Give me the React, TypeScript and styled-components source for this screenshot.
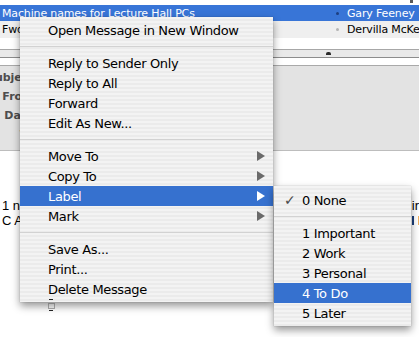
import React from 'react'
import styled, { createGlobalStyle } from 'styled-components'

const GlobalStyle = createGlobalStyle`
  html, body {
    margin: 0;
    padding: 0;
    background: #ffffff;
  }
  body {
    width: 419px;
    height: 337px;
    overflow: hidden;
    font-family: 'DejaVu Sans', 'Liberation Sans', sans-serif;
  }
`

const Screen = styled.div`
  position: relative;
  width: 419px;
  height: 337px;
  overflow: hidden;
  background: #ffffff;
  display: flex;
  flex-direction: column;
`

const TopStrip = styled.div`
  height: 5px;
  display: flex;
  justify-content: flex-end;
  padding-right: 6px;
`

const Tick = styled.span`
  width: 3px;
  height: 3px;
  background: #5a5a5a;
`

const MessageRow = styled.div<{ $selected?: boolean }>`
  height: ${({ $selected }) => ($selected ? '16px' : '17px')};
  display: flex;
  align-items: center;
  background: ${({ $selected }) => ($selected ? '#3875d7' : '#efefef')};
  color: ${({ $selected }) => ($selected ? '#ffffff' : '#000000')};
  font-size: 11px;
  letter-spacing: -0.15px;
  white-space: nowrap;
`

const SubjectCell = styled.span`
  flex: 1;
  padding-left: 2px;
  overflow: hidden;
`

const SenderCell = styled.span`
  width: 83px;
  flex: none;
  display: flex;
  align-items: center;
  gap: 8px;
  overflow: hidden;
`

const Dot = styled.span<{ $selected?: boolean }>`
  width: 3px;
  height: 3px;
  border-radius: 50%;
  flex: none;
  background: ${({ $selected }) => ($selected ? '#1d3f80' : '#b4b4b4')};
`

const Gap = styled.div<{ $h: number }>`
  height: ${({ $h }) => $h}px;
  flex: none;
`

const Splitter = styled.div`
  height: 7px;
  border-top: 1px solid #a7a7a7;
  border-bottom: 1px solid #8c8c8c;
  background: #e9e9e9;
  display: flex;
  align-items: center;
  padding-left: 326px;
`

const Dimple = styled.span`
  width: 5px;
  height: 3px;
  border-radius: 2px 2px 0 0;
  background: #2a2a2a;
`

const Header = styled.div`
  height: 82px;
  border-top: 1px solid #a9a9a9;
  border-bottom: 1px solid #bdbdbd;
  background: #e3e3e3;
  padding-top: 2px;
  box-sizing: content-box;
`

const HeaderRow = styled.div`
  height: 19px;
  display: flex;
  align-items: center;
`

const HeaderLabel = styled.span`
  width: 38px;
  flex: none;
  display: flex;
  justify-content: flex-end;
  font-size: 11px;
  font-weight: bold;
  color: #4d4d4d;
  white-space: nowrap;
`

const Body = styled.div`
  padding-top: 47px;
  font-family: 'Liberation Sans', Arial, sans-serif;
  font-size: 13px;
  color: #000000;
`

const BodyLine = styled.div`
  height: 15px;
  display: flex;
  align-items: center;
  justify-content: space-between;
  white-space: nowrap;
  padding-left: 2px;
`

const TailBits = styled.span`
  display: flex;
  align-items: center;
  gap: 4px;
  width: 7px;
  overflow: hidden;
`

const Bit = styled.span<{ $colour: string }>`
  width: 2px;
  height: 9px;
  flex: none;
  background: ${({ $colour }) => $colour};
`

const MenuPanel = styled.div`
  position: absolute;
  padding: 3px 0;
  background: repeating-linear-gradient(
    to bottom,
    #f3f3f3 0px,
    #f3f3f3 2px,
    #ebebeb 2px,
    #ebebeb 4px
  );
  box-shadow: 0 4px 8px rgba(0, 0, 0, 0.42), 0 0 1px rgba(0, 0, 0, 0.25);
  font-size: 13px;
  letter-spacing: -0.35px;
`

const ContextMenu = styled(MenuPanel)`
  left: 20px;
  top: 17px;
  width: 253px;
`

const LabelMenu = styled(MenuPanel)`
  left: 274px;
  top: 186px;
  width: 137px;
  padding-top: 4px;
`

const Item = styled.div<{ $active?: boolean }>`
  height: 20px;
  display: flex;
  align-items: center;
  padding-right: 8px;
  background: ${({ $active }) => ($active ? '#3671cf' : 'transparent')};
  color: ${({ $active }) => ($active ? '#ffffff' : '#000000')};
  white-space: nowrap;
`

const Gutter = styled.span`
  width: 28px;
  flex: none;
  padding-left: 10px;
  box-sizing: border-box;
  color: #4a4a4a;
  font-size: 14px;
  font-weight: bold;
`

const Arrow = styled.span<{ $active?: boolean }>`
  margin-left: auto;
  width: 0;
  height: 0;
  border-top: 5px solid transparent;
  border-bottom: 5px solid transparent;
  border-left: 8px solid ${({ $active }) => ($active ? '#ffffff' : '#6a6a6a')};
`

const Separator = styled.div`
  height: 13px;
  display: flex;
  align-items: center;

  &::after {
    content: '';
    flex: 1;
    height: 1px;
    background: #d2d2d2;
  }
`

const Cursor = styled.svg`
  position: absolute;
  left: 47px;
  top: 298px;
`

type Entry =
  | { kind: 'item'; label: string; submenu?: boolean; active?: boolean; checked?: boolean }
  | { kind: 'sep' }

const contextEntries: Entry[] = [
  { kind: 'item', label: 'Open Message in New Window' },
  { kind: 'sep' },
  { kind: 'item', label: 'Reply to Sender Only' },
  { kind: 'item', label: 'Reply to All' },
  { kind: 'item', label: 'Forward' },
  { kind: 'item', label: 'Edit As New...' },
  { kind: 'sep' },
  { kind: 'item', label: 'Move To', submenu: true },
  { kind: 'item', label: 'Copy To', submenu: true },
  { kind: 'item', label: 'Label', submenu: true, active: true },
  { kind: 'item', label: 'Mark', submenu: true },
  { kind: 'sep' },
  { kind: 'item', label: 'Save As...' },
  { kind: 'item', label: 'Print...' },
  { kind: 'item', label: 'Delete Message' }
]

const labelEntries: Entry[] = [
  { kind: 'item', label: '0 None', checked: true },
  { kind: 'sep' },
  { kind: 'item', label: '1 Important' },
  { kind: 'item', label: '2 Work' },
  { kind: 'item', label: '3 Personal' },
  { kind: 'item', label: '4 To Do', active: true },
  { kind: 'item', label: '5 Later' }
]

const MenuEntries: React.FC<{ entries: Entry[] }> = ({ entries }) => (
  <>
    {entries.map((entry, i) =>
      entry.kind === 'sep' ? (
        <Separator key={i} />
      ) : (
        <Item key={i} $active={entry.active}>
          <Gutter>{entry.checked ? '✓' : ''}</Gutter>
          {entry.label}
          {entry.submenu && <Arrow $active={entry.active} />}
        </Item>
      )
    )}
  </>
)

const headerLabels = ['Subject:', 'From:', 'Date:', 'To:']

export default function App() {
  return (
    <>
      <GlobalStyle />
      <Screen>
        <TopStrip>
          <Tick />
        </TopStrip>
        <MessageRow $selected>
          <SubjectCell>Machine names for Lecture Hall PCs</SubjectCell>
          <SenderCell>
            <Dot $selected />
            Gary Feeney
          </SenderCell>
        </MessageRow>
        <MessageRow>
          <SubjectCell>Fwd: Lecture Hall PCs</SubjectCell>
          <SenderCell>
            <Dot />
            Dervilla McKenna
          </SenderCell>
        </MessageRow>
        <Gap $h={11} />
        <Splitter>
          <Dimple />
        </Splitter>
        <Gap $h={7} />
        <Header>
          {headerLabels.map((label) => (
            <HeaderRow key={label}>
              <HeaderLabel>
                <span>{label}</span>
              </HeaderLabel>
            </HeaderRow>
          ))}
        </Header>
        <Body>
          <BodyLine>
            <span>1 new machine name</span>
            <span>ir</span>
          </BodyLine>
          <BodyLine>
            <span>C A</span>
            <TailBits>
              <Bit $colour="#1c3f7a" />
              <Bit $colour="#f0b060" />
            </TailBits>
          </BodyLine>
        </Body>

        <ContextMenu>
          <MenuEntries entries={contextEntries} />
        </ContextMenu>
        <LabelMenu>
          <MenuEntries entries={labelEntries} />
        </LabelMenu>

        <Cursor width="10" height="14" viewBox="0 0 10 14">
          <path d="M2 1.5h4M2 12.5h4" stroke="#222" strokeWidth="1" />
          <rect x="1.5" y="5.5" width="6" height="5" fill="none" stroke="#555" strokeWidth="1" strokeDasharray="1 1" />
        </Cursor>
      </Screen>
    </>
  )
}
